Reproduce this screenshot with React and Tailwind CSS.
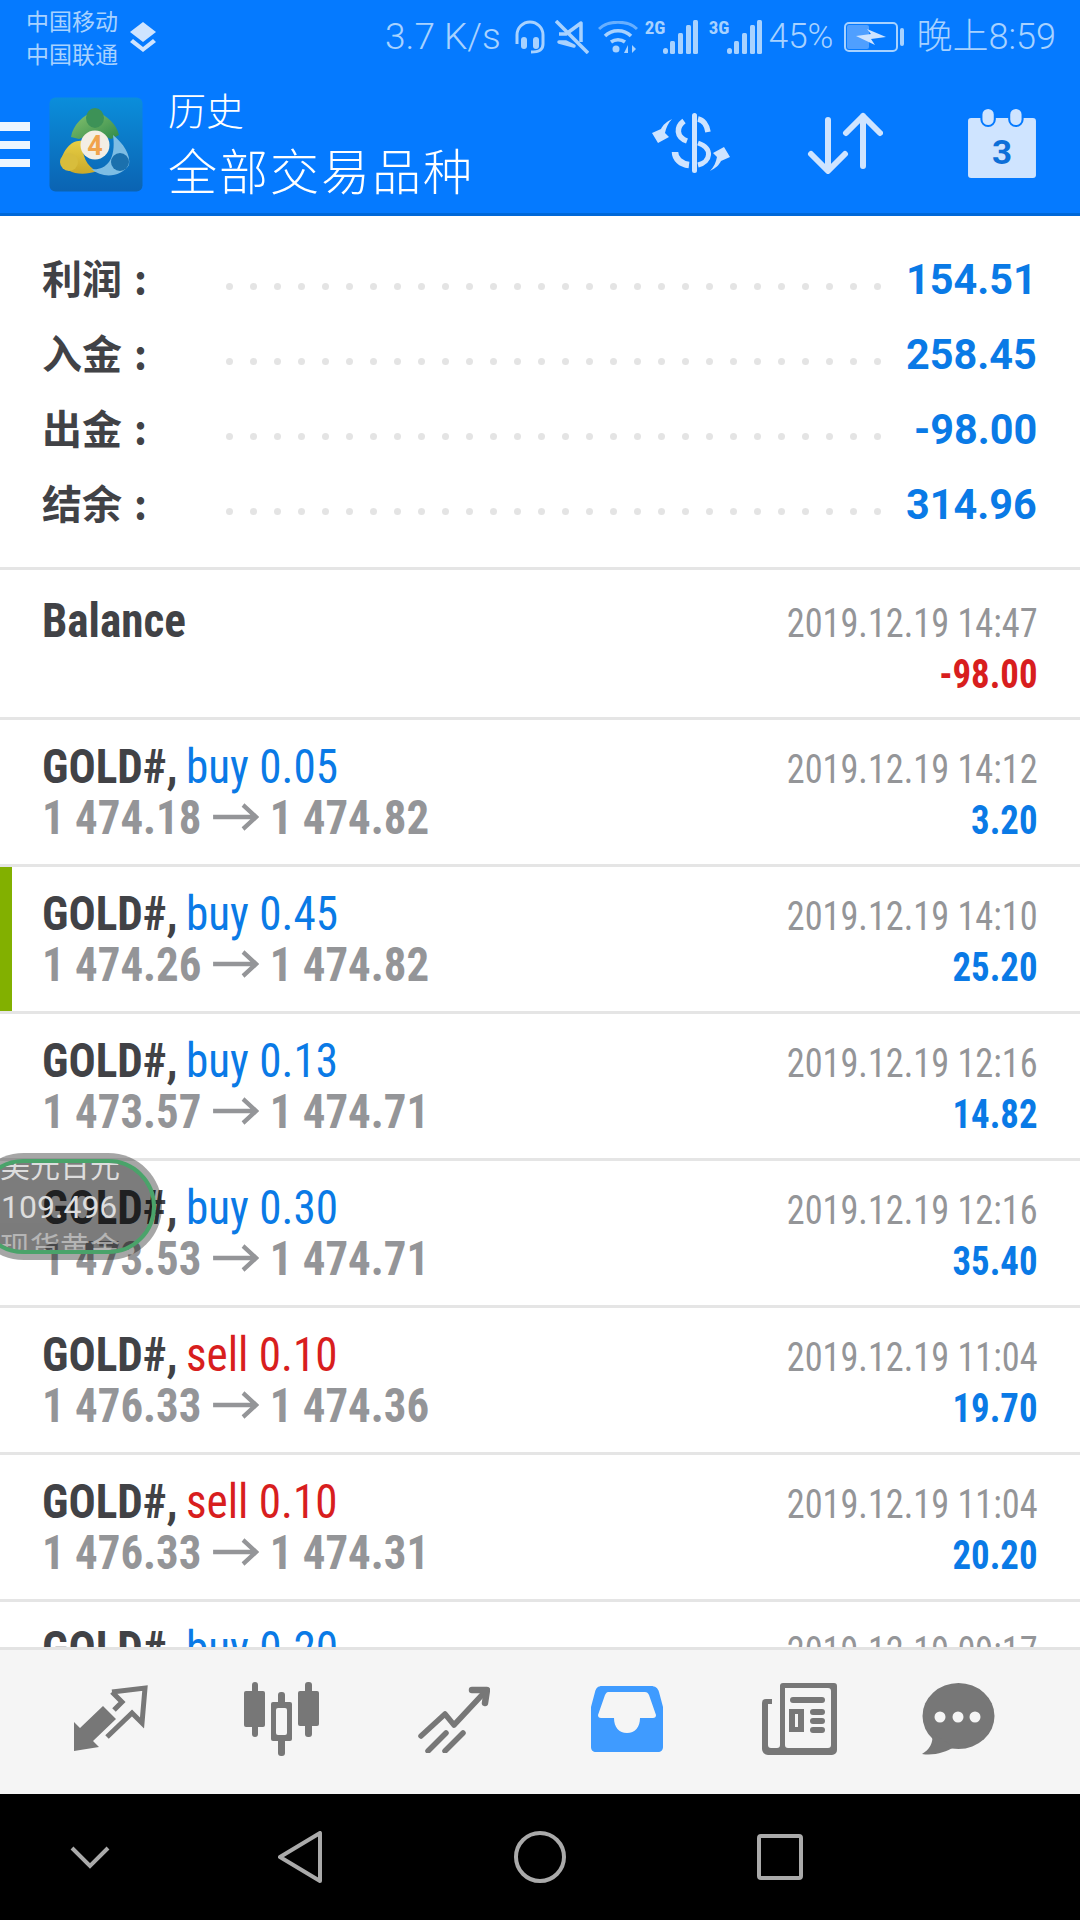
import React from "react";

const sans = "font-['Roboto','Noto_Sans_CJK_SC',sans-serif]";
const cjk = "font-['Noto_Sans_CJK_SC','Roboto',sans-serif]";

const summary = [
  ["利润", "154.51"],
  ["入金", "258.45"],
  ["出金", "-98.00"],
  ["结余", "314.96"],
];

const rows = [
  { sym: "Balance", date: "2019.12.19 14:47", amt: "-98.00", red: true, first: true },
  { sym: "GOLD#,", side: "buy 0.05", price: "1 474.18", to: "1 474.82", date: "2019.12.19 14:12", amt: "3.20" },
  { sym: "GOLD#,", side: "buy 0.45", price: "1 474.26", to: "1 474.82", date: "2019.12.19 14:10", amt: "25.20", mark: true },
  { sym: "GOLD#,", side: "buy 0.13", price: "1 473.57", to: "1 474.71", date: "2019.12.19 12:16", amt: "14.82" },
  { sym: "GOLD#,", side: "buy 0.30", price: "1 473.53", to: "1 474.71", date: "2019.12.19 12:16", amt: "35.40" },
  { sym: "GOLD#,", side: "sell 0.10", sell: true, price: "1 476.33", to: "1 474.36", date: "2019.12.19 11:04", amt: "19.70" },
  { sym: "GOLD#,", side: "sell 0.10", sell: true, price: "1 476.33", to: "1 474.31", date: "2019.12.19 11:04", amt: "20.20" },
  { sym: "GOLD#,", side: "buy 0.20", price: "1 474.18", to: "1 474.82", date: "2019.12.19 09:17", amt: "3.20" },
];

function Signal({ label, className }) {
  return (
    <div className={"relative w-[53px] h-[34px] " + className}>
      <span className="absolute left-0 top-[-2px] text-[19px] leading-[20px] font-bold text-[#a8d2ff] font-['Roboto',sans-serif] [font-stretch:75%]">{label}</span>
      <svg width="53" height="34" viewBox="0 0 53 34" fill="#a8d2ff" className="block">
        <rect x="18" y="28" width="5" height="6" rx="2.5" />
        <rect x="25" y="21" width="5" height="13" rx="1.5" />
        <rect x="33" y="13" width="5" height="21" rx="1.5" />
        <rect x="41" y="5" width="5" height="29" rx="1.5" />
        <rect x="48" y="0" width="5" height="34" rx="1.5" />
      </svg>
    </div>
  );
}

function StatusBar() {
  return (
    <div className="flex items-center h-[82px] pb-[8px] text-[#a8d2ff]">
      <div className={"ml-[26px] w-[95px] text-[23px] leading-[33px] " + cjk}>
        <div>中国移动</div>
        <div>中国联通</div>
      </div>
      <svg width="28" height="30" viewBox="0 0 28 30" className="ml-[8px]" fill="#cfe4ff">
        <path d="M14 0 L27 10 L14 20 L1 10Z" />
        <path d="M4 17 L14 25 L24 17 L27 20 L14 30 L1 20Z" />
      </svg>
      <span className="ml-[228px] text-[37px] leading-[40px] font-light font-['Roboto',sans-serif] whitespace-nowrap">3.7 K/s</span>
      <svg width="32" height="34" viewBox="0 0 32 34" className="ml-[13px]" fill="none" stroke="#a8d2ff" strokeWidth="3">
        <path d="M3 24 V15 a13 13 0 0 1 26 0 V24" />
        <rect x="7" y="17" width="6" height="12" rx="3" fill="#a8d2ff" stroke="none" />
        <rect x="19" y="17" width="6" height="12" rx="3" fill="#a8d2ff" stroke="none" />
        <path d="M29 24 C29 30 25 32 17 32" />
      </svg>
      <svg width="34" height="34" viewBox="0 0 34 34" className="ml-[9px]" fill="none" stroke="#a8d2ff" strokeWidth="3.5">
        <path d="M4 14 H11 L26 3 V22 M19 26 L11 22 H4Z" strokeLinejoin="round" />
        <path d="M1 1 L33 33" />
      </svg>
      <svg width="40" height="33" viewBox="0 0 40 33" className="ml-[9px]" fill="none" stroke="#a8d2ff">
        <path d="M1 8 C10 -1 30 -1 39 8" strokeWidth="3" opacity=".6" />
        <path d="M7 15 C14 8 26 8 33 15" strokeWidth="3.5" />
        <path d="M13 21 C17 18 23 18 27 21" strokeWidth="3.5" />
        <circle cx="18" cy="28" r="3.5" fill="#a8d2ff" stroke="none" />
        <path d="M30 24 V32 L26 32Z M34 24 V32 L38 28Z" fill="#a8d2ff" stroke="none" />
      </svg>
      <Signal label="2G" className="ml-[7px]" />
      <Signal label="3G" className="ml-[11px]" />
      <span className="ml-[7px] text-[35px] leading-[40px] font-light font-['Roboto',sans-serif]">45%</span>
      <svg width="60" height="30" viewBox="0 0 60 30" className="ml-[11px]" fill="none">
        <rect x="1" y="1" width="52" height="28" rx="4" stroke="#a8d2ff" strokeWidth="2" />
        <rect x="3" y="3" width="22" height="24" rx="2" fill="#4f9fff" />
        <path d="M12 14 L27 12 L23 7 L42 15 L27 17 L31 23 L12 14Z" fill="#cfe4ff" />
        <rect x="56" y="6" width="4" height="18" rx="2" fill="#a8d2ff" />
      </svg>
      <span className="ml-[12px] text-[36px] leading-[40px] font-light whitespace-nowrap font-['Roboto','Noto_Sans_CJK_SC',sans-serif]">晚上8:59</span>
    </div>
  );
}

function Logo() {
  return (
    <svg width="94" height="95" viewBox="0 0 94 95" className="ml-[19px] shrink-0">
      <defs>
        <linearGradient id="lg" x1="0" y1="0" x2="0" y2="1">
          <stop offset="0" stopColor="#0b8edb" />
          <stop offset="1" stopColor="#0b63b2" />
        </linearGradient>
        <linearGradient id="gr" x1="0" y1="0" x2="1" y2="1">
          <stop offset="0" stopColor="#8cc56f" />
          <stop offset="1" stopColor="#2f8a4b" />
        </linearGradient>
        <linearGradient id="ye" x1="0" y1="0" x2="0" y2="1">
          <stop offset="0" stopColor="#e8cf45" />
          <stop offset="1" stopColor="#c9a92a" />
        </linearGradient>
      </defs>
      <rect x="0.5" y="0.5" width="93" height="94" rx="6" fill="url(#lg)" />
      <path d="M46 14 C34 18 24 28 22 40 L30 42 L46 36 L62 42 L70 38 C68 28 58 18 46 14Z" fill="url(#gr)" />
      <ellipse cx="46" cy="21" rx="9" ry="10" fill="#3d9257" />
      <path d="M34 44 C22 42 14 54 12 64 C16 76 32 80 48 74 C38 70 32 58 34 44Z" fill="url(#ye)" />
      <circle cx="20" cy="65" r="9" fill="#d8bd3c" />
      <path d="M64 38 C74 46 82 58 80 68 C72 80 54 82 42 72 C54 74 68 66 64 38Z" fill="#7dbde4" />
      <circle cx="71" cy="65" r="9" fill="#1b70ad" />
      <circle cx="46" cy="48" r="14.5" fill="#f3eee4" />
      <text x="46" y="58" textAnchor="middle" fontSize="27" fontWeight="700" fill="#f0a34c" fontFamily="Roboto, sans-serif">4</text>
    </svg>
  );
}

function HeaderIcons() {
  return (
    <div className="ml-auto flex items-center mt-[-4px] text-[#cfe4ff]">
      <svg width="80" height="62" viewBox="0 0 80 62" fill="none" stroke="#cfe4ff">
        <rect x="41" y="1" width="5" height="60" rx="2.5" fill="#cfe4ff" stroke="none" />
        <path d="M47 7 C52 8 56 13 57 20" strokeWidth="5.5" />
        <path d="M33 9 C25 15 25 25 36 29" strokeWidth="5.5" />
        <path d="M24 40 C24 47 30 52 38 53" strokeWidth="6.5" />
        <path d="M47 31 C62 36 60 50 47 53" strokeWidth="5" />
        <path d="M21 7 C15 10 12 13 10 17 L1 21 L7 31 L18 25 L14 21 C15 16 17 11 21 7Z" fill="#cfe4ff" stroke="none" />
        <path d="M21 7 C15 10 12 13 10 17 L1 21 L7 31 L18 25 L14 21 C15 16 17 11 21 7Z" fill="#cfe4ff" stroke="none" transform="rotate(180 40 33)" />
      </svg>
      <svg width="76" height="62" viewBox="0 0 76 62" fill="none" stroke="#cfe4ff" strokeWidth="6" strokeLinecap="round" strokeLinejoin="round" className="ml-[76px]">
        <path d="M21 8 V58 M4 42 L21 59 L38 42" />
        <path d="M56 4 V54 M39 21 L56 4 L73 21" />
      </svg>
      <svg width="70" height="72" viewBox="0 0 68 72" preserveAspectRatio="none" className="ml-[84px] mr-[43px]">
        <path d="M4 11 H64 a3 3 0 0 1 3 3 V68 a3 3 0 0 1 -3 3 H4 a3 3 0 0 1 -3 -3 V14 a3 3 0 0 1 3 -3Z" fill="#cfe4ff" />
        <rect x="14" y="1" width="13" height="18" rx="6.5" fill="#cfe4ff" stroke="#057aff" strokeWidth="2" />
        <rect x="41" y="1" width="13" height="18" rx="6.5" fill="#cfe4ff" stroke="#057aff" strokeWidth="2" />
        <text x="34" y="57" textAnchor="middle" fontSize="34" fontWeight="700" fill="#0d6fd8" fontFamily="Roboto, sans-serif">3</text>
      </svg>
    </div>
  );
}

function Header() {
  return (
    <div className="bg-[#057aff] border-b-[3px] border-[#0068d8] shrink-0">
      <StatusBar />
      <div className="flex items-center h-[131px] pb-[6px]">
        <div className="w-[30px] flex flex-col gap-[10px] shrink-0">
          <div className="h-[9px] bg-[#eef6ff]" />
          <div className="h-[8px] bg-[#eef6ff]" />
          <div className="h-[8px] bg-[#eef6ff]" />
        </div>
        <Logo />
        <div className={"ml-[25px] text-white " + cjk}>
          <div className="text-[38px] leading-[46px] font-light mt-[-5px]">历史</div>
          <div className="text-[49px] leading-[58px] font-light tracking-[2px] mt-[8px]">全部交易品种</div>
        </div>
        <HeaderIcons />
      </div>
    </div>
  );
}

function Summary() {
  return (
    <div className="pt-[27px] pb-[24px] border-b-[3px] border-[#e5e5e5] shrink-0">
      {summary.map(([k, v]) => (
        <div key={k} className="flex items-center h-[75px] pl-[42px] pr-[43px]">
          <div className={"w-[184px] text-[40px] leading-[50px] font-bold text-[#414246] mt-[-7px] " + cjk}>
            {k} <span className="ml-[3px]">:</span>
          </div>
          <div className="w-[655px] flex justify-between pt-[12px]">
            {Array.from({ length: 28 }).map((_, i) => (
              <span key={i} className="w-[7px] h-[7px] rounded-full bg-[#e4e4e4]" />
            ))}
          </div>
          <div className="ml-auto text-[42px] leading-[50px] font-bold text-[#0a7ae6] font-['Roboto',sans-serif] mt-[-2px] origin-right scale-x-[.985]">{v}</div>
        </div>
      ))}
    </div>
  );
}

const cond = "[font-stretch:75%] font-['Roboto',sans-serif]";

function Row({ r }) {
  return (
    <div className={"relative flex justify-between shrink-0 pl-[42px] pr-[42px] border-b-[3px] border-[#e5e5e5] " + (r.first ? "h-[150px] pt-[25px]" : "h-[147px] pt-[21px]")}>
      {r.mark && <div className="absolute left-0 top-0 bottom-0 w-[12px] bg-[#82b000]" />}
      <div className={cond}>
        <div className="text-[48px] leading-[51px] whitespace-nowrap origin-left scale-x-[.94]">
          <span className="font-bold text-[#414246]">{r.sym}</span>
          {r.side && <span className={"ml-[9px] " + (r.sell ? "text-[#d81e1e]" : "text-[#0a7ae6]")}>{r.side}</span>}
        </div>
        {r.price && (
          <div className="text-[48px] leading-[51px] font-bold text-[#949598] whitespace-nowrap flex items-center origin-left scale-x-[.935]">
            <span>{r.price}</span>
            <svg width="49" height="30" viewBox="0 0 49 30" fill="none" stroke="#949598" strokeWidth="4.5" className="mx-[12px] mt-[-2px] shrink-0">
              <path d="M0 15 H46 M32 3 L46 15 L32 27" />
            </svg>
            <span>{r.to}</span>
          </div>
        )}
      </div>
      <div className={"text-right mt-[3px] " + cond}>
        <div className="text-[40px] leading-[52px] text-[#949598] whitespace-nowrap origin-right scale-x-[.907]">{r.date}</div>
        <div className={"text-[40px] leading-[50px] font-bold origin-right scale-x-[.92] " + (r.red ? "text-[#d81e1e]" : "text-[#0a7ae6]")}>{r.amt}</div>
      </div>
    </div>
  );
}

function NavBar() {
  const g = "#777777";
  return (
    <div className="h-[147px] shrink-0 bg-[#f5f5f5] border-t-[3px] border-[#e3e3e3] flex items-center pb-[6px]">
      <svg width="76" height="68" viewBox="0 0 76 68" className="ml-[72px]" fill="none">
        <path d="M2 66 L2 37 L8 43 L31 21 L44 34 L21 56 L27 62Z" fill={g} />
        <path d="M40 7 L73 3 L70 38 L60 28 L35 52 M40 7 L50 17 L42 25" stroke={g} strokeWidth="5" />
      </svg>
      <svg width="76" height="74" viewBox="0 0 76 74" className="ml-[96px]" fill={g}>
        <rect x="0" y="9" width="21" height="36" rx="2" />
        <rect x="8" y="0" width="6" height="55" rx="3" />
        <rect x="27" y="20" width="21" height="39" rx="2" />
        <rect x="34" y="10" width="7" height="64" rx="3" />
        <rect x="32" y="26" width="11" height="27" rx="2" fill="#f5f5f5" />
        <rect x="54" y="9" width="21" height="35" rx="2" />
        <rect x="61" y="0" width="7" height="55" rx="3" />
      </svg>
      <svg width="72" height="68" viewBox="0 0 72 68" className="ml-[98px]" fill="none" stroke={g} strokeWidth="5.5" strokeLinecap="round" strokeLinejoin="round">
        <path d="M3 51 L27 29 L36 40 L64 10" />
        <path d="M54 5 L69 5 L67 18" strokeWidth="6.5" />
        <path d="M10 66 L28 48 M27 66 L45 48" />
      </svg>
      <svg width="74" height="68" viewBox="0 0 74 68" className="ml-[100px]">
        <path d="M12 1 H61 C65 1 68 3 69 7 L73 22 V62 C73 65 71 67 68 67 H6 C3 67 1 65 1 62 V22 L5 7 C6 3 8 1 12 1Z" fill="#3f9bff" />
        <path d="M18 7 H55 C57 7 58 8 59 10 L66 30 C66 32 65 33 63 33 H50 C50 42 45 48 37 48 C29 48 24 42 24 33 H11 C9 33 8 32 8 30 L15 10 C16 8 17 7 18 7Z" fill="#f5f5f5" />
      </svg>
      <svg width="76" height="73" viewBox="0 0 76 73" className="ml-[98px]" fill={g}>
        <path d="M18 3 a3 3 0 0 1 3 -3 H72 a3 3 0 0 1 3 3 V67 a5 5 0 0 1 -5 5 H6 a6 6 0 0 1 -6 -6 V20 a4 4 0 0 1 4 -4 H10 V21 H6 V62 a3 3 0 0 0 3 3 H15 a3 3 0 0 0 3 -3Z M23 5 V62 a3 3 0 0 0 3 3 H66 a3 3 0 0 0 3 -3 V8 a3 3 0 0 0 -3 -3Z" fillRule="evenodd" />
        <rect x="28" y="14" width="35" height="6" rx="3" />
        <path d="M27 26 H42 V49 H27Z M33 31 V44 H36 V31Z" fillRule="evenodd" />
        <rect x="48" y="26" width="15" height="6" rx="3" />
        <rect x="48" y="35" width="15" height="6" rx="3" />
        <rect x="48" y="44" width="15" height="6" rx="3" />
      </svg>
      <svg width="73" height="73" viewBox="0 0 73 73" className="ml-[84px]">
        <ellipse cx="36.5" cy="33" rx="36" ry="33" fill={g} />
        <path d="M10 50 C12 60 7 67 0 71 C12 73 24 69 32 64Z" fill={g} />
        <circle cx="18" cy="34" r="5.5" fill="#f5f5f5" />
        <circle cx="36" cy="34" r="5.5" fill="#f5f5f5" />
        <circle cx="53" cy="34" r="5.5" fill="#f5f5f5" />
      </svg>
    </div>
  );
}

function SysBar() {
  return (
    <div className="h-[126px] shrink-0 bg-black flex items-center">
      <svg width="40" height="24" viewBox="0 0 40 24" className="ml-[70px]" fill="none" stroke="#aaaaaa" strokeWidth="4">
        <path d="M2 3 L20 21 L38 3" />
      </svg>
      <svg width="44" height="52" viewBox="0 0 44 52" className="ml-[168px]" fill="none" stroke="#aaaaaa" strokeWidth="4" strokeLinejoin="round">
        <path d="M42 2 V50 L2 26Z" />
      </svg>
      <svg width="52" height="52" viewBox="0 0 52 52" className="ml-[192px]" fill="none" stroke="#aaaaaa" strokeWidth="4">
        <circle cx="26" cy="26" r="24" />
      </svg>
      <svg width="46" height="46" viewBox="0 0 46 46" className="ml-[191px]" fill="none" stroke="#aaaaaa" strokeWidth="4">
        <rect x="2" y="2" width="42" height="42" rx="2" />
      </svg>
    </div>
  );
}

function Floating() {
  return (
    <div className="absolute left-[-30px] top-[1153px] w-[192px] h-[107px] rounded-full bg-black/35 p-[6px]">
      <div className="w-full h-full rounded-full border-[4px] border-[#4aa36a] bg-black/25 overflow-hidden relative text-[#dddddd]">
        <div className="absolute left-[20px] top-[-17px] text-[30px] leading-[36px] whitespace-nowrap font-['Noto_Sans_CJK_SC',sans-serif]">美元日元</div>
        <div className="absolute left-[21px] top-[26px] text-[32px] leading-[36px] font-['Roboto',sans-serif]">109.496</div>
        <div className="absolute left-[20px] top-[64px] text-[30px] leading-[36px] whitespace-nowrap font-['Noto_Sans_CJK_SC',sans-serif] opacity-60">现货黄金</div>
      </div>
    </div>
  );
}

export default function App() {
  return (
    <div className={"relative w-[1080px] h-[1920px] overflow-hidden bg-white flex flex-col " + sans}>
      <Header />
      <Summary />
      <div className="flex-1 min-h-0 overflow-hidden flex flex-col">
        {rows.map((r, i) => (
          <Row key={i} r={r} />
        ))}
      </div>
      <NavBar />
      <SysBar />
      <Floating />
    </div>
  );
}
